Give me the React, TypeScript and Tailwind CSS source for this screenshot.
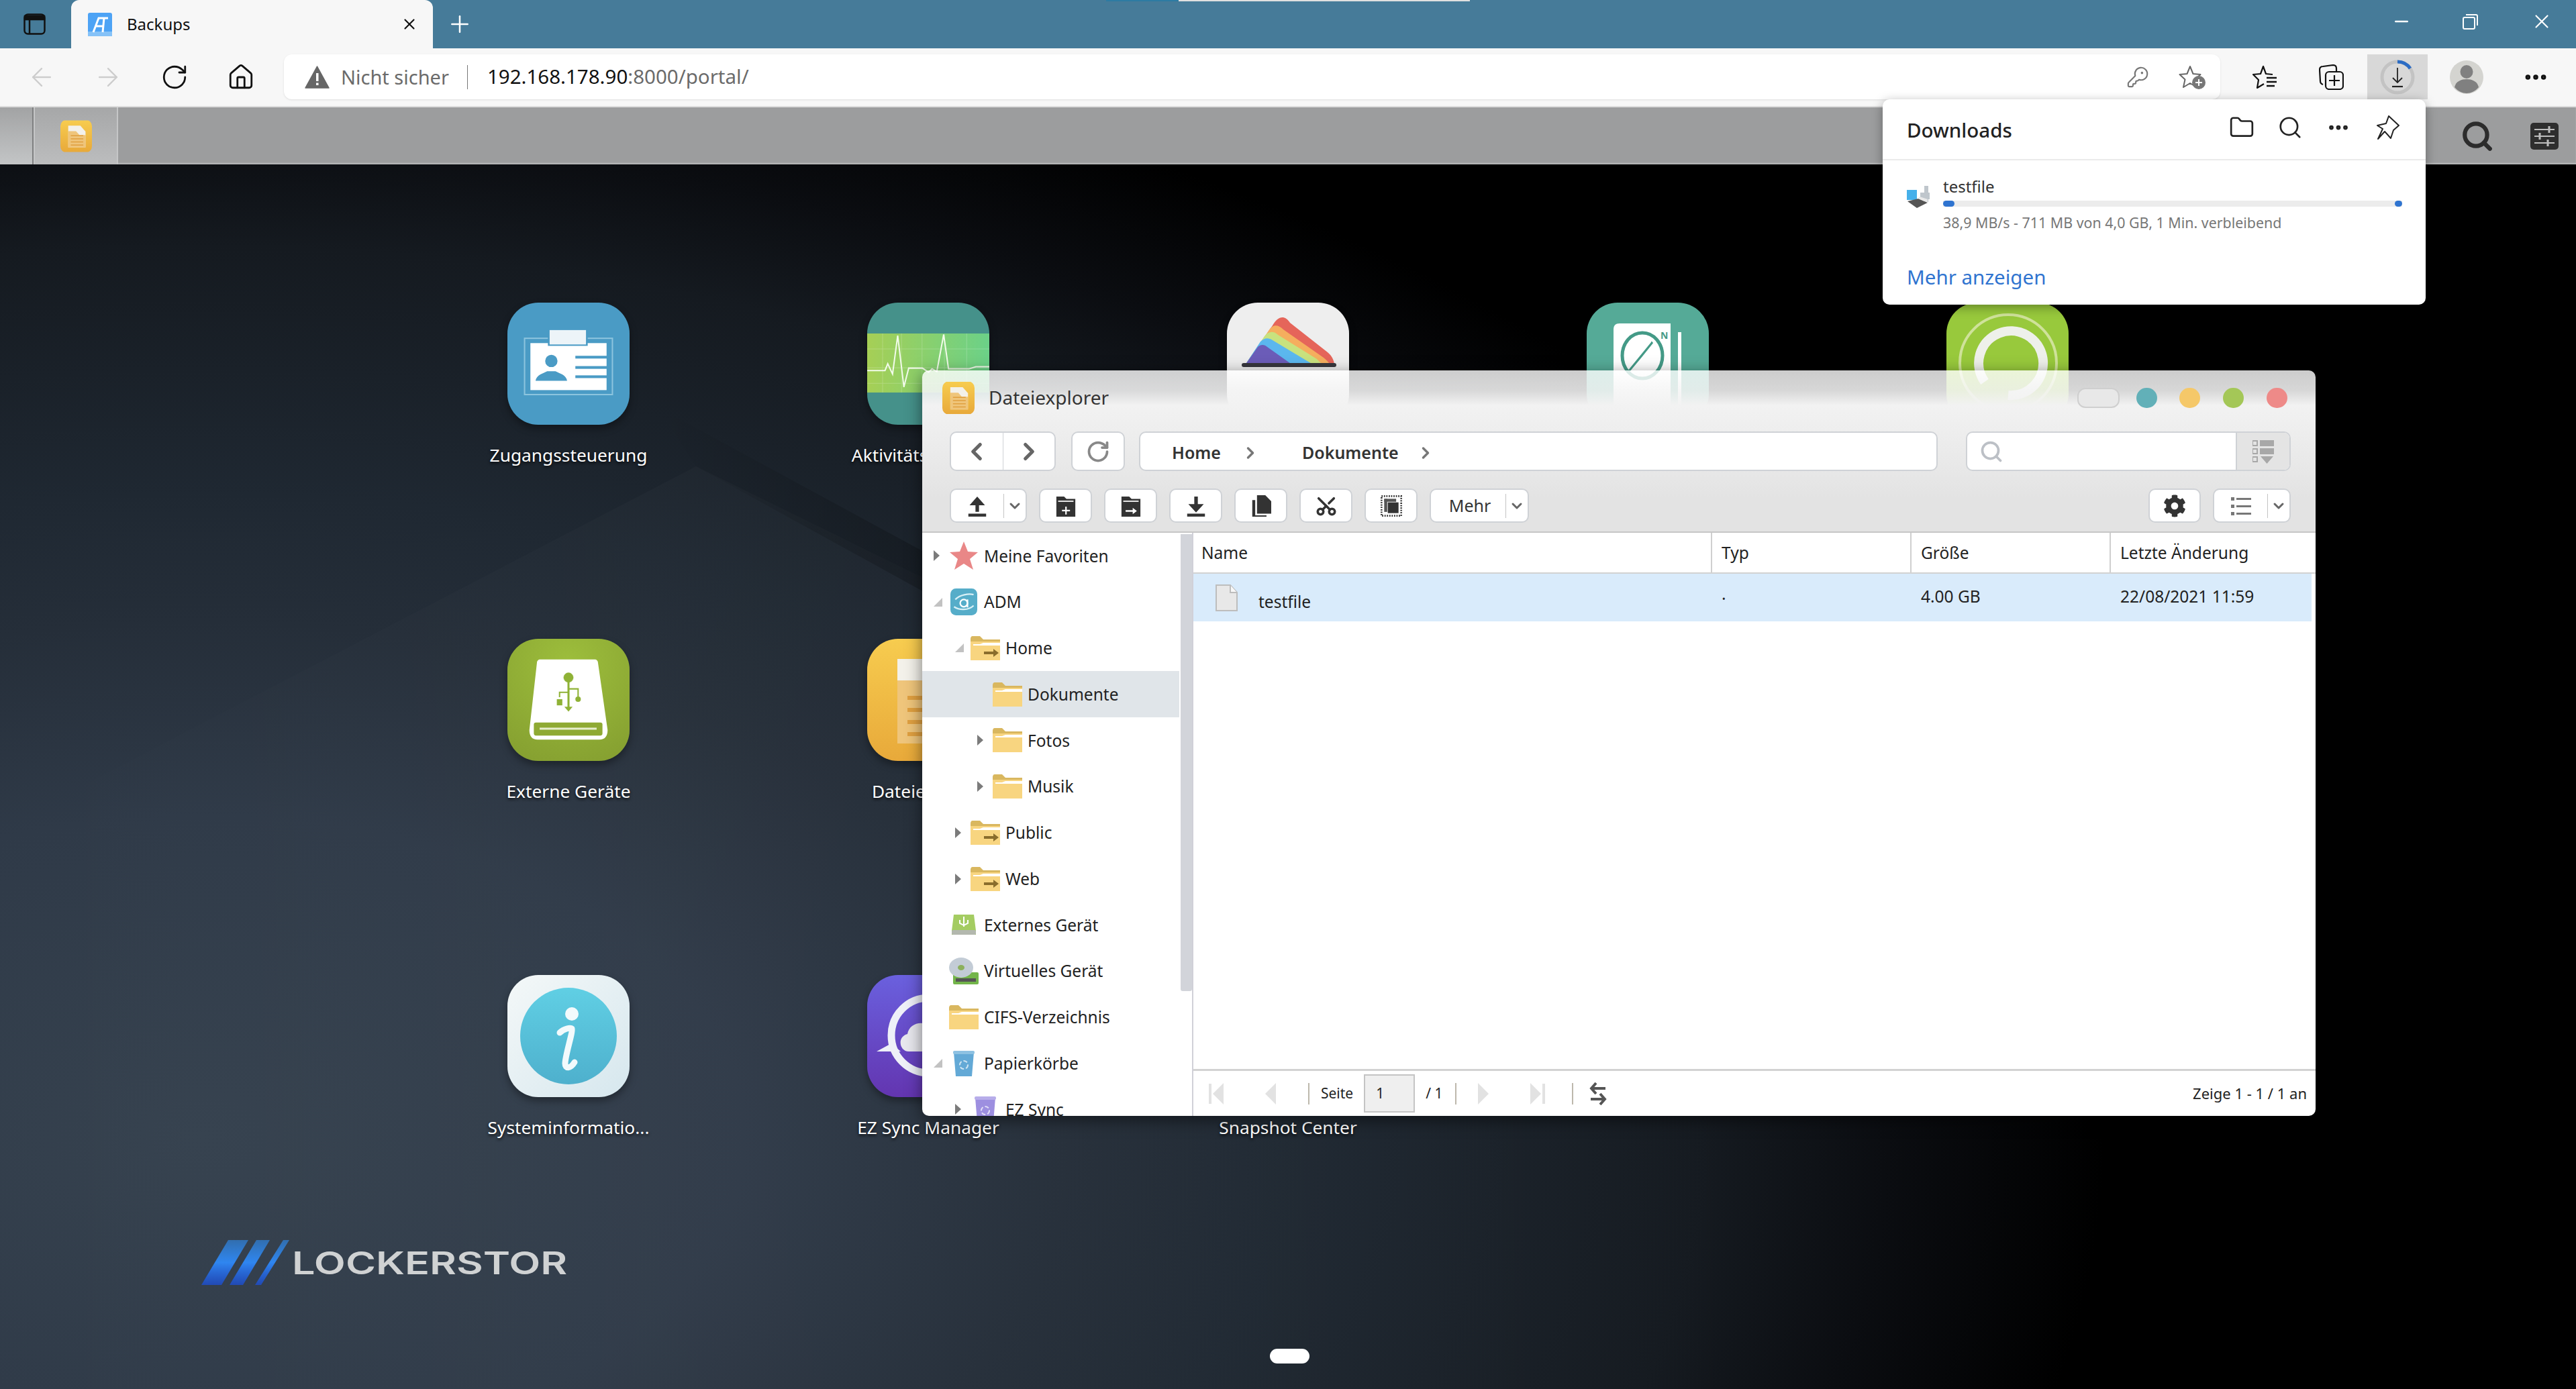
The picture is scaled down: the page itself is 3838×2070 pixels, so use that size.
import { ArrowLeft, ArrowRight, RotateCw, House, KeyRound, Scissors, ChevronDown, ChevronLeft, ChevronRight, Search, X, Plus, Minus, MoreHorizontal, Folder } from 'lucide-react';
import { FaCog } from 'react-icons/fa';
import type { ReactNode } from 'react';

/* ---------- app icons ---------- */

function AccessIcon() {
  return (
    <svg viewBox="0 0 356 356" className="w-full h-full">
      <rect width="356" height="356" fill="#4a9bc5" />
      <rect x="50" y="104" width="256" height="164" fill="none" stroke="#8cc4de" strokeWidth="4" />
      <rect x="67" y="118" width="222" height="137" fill="#fff" />
      <rect x="118" y="76" width="116" height="50" fill="#4a9bc5" />
      <rect x="123" y="80" width="106" height="42" fill="#edf4f8" />
      <circle cx="128" cy="170" r="18" fill="#4a9bc5" />
      <path d="M82 228c2-18 24-22 34-28h24c10 6 32 10 34 28z" fill="#4a9bc5" />
      <rect x="198" y="155" width="92" height="8" fill="#4a9bc5" />
      <rect x="198" y="185" width="92" height="8" fill="#4a9bc5" />
      <rect x="198" y="212" width="92" height="8" fill="#4a9bc5" />
    </svg>
  );
}

function MonitorIcon() {
  return (
    <svg viewBox="0 0 356 356" className="w-full h-full">
      <defs>
        <linearGradient id="ecg" x1="0" x2="1" y1="0" y2="0">
          <stop offset="0" stopColor="#a6cf55" />
          <stop offset="1" stopColor="#6bd188" />
        </linearGradient>
      </defs>
      <rect width="356" height="356" fill="#45918a" />
      <rect y="90" width="356" height="172" fill="url(#ecg)" />
      <path d="M45 90v172M100 90v172M160 90v172M225 90v172M290 90v172M0 135h356M0 190h356M0 235h356" stroke="#ffffff" strokeOpacity=".2" strokeWidth="2" />
      <path d="M0 198h52l8-20 14 30 15-112 18 150 14-55h40l18 12 10-10 14 8 20-108 14 100h60l20-6h50" fill="none" stroke="#f1fbe9" strokeWidth="4" />
    </svg>
  );
}

function RainbowIcon() {
  return (
    <svg viewBox="0 0 182 182" className="w-full h-full">
      <rect width="182" height="182" fill="#eeeeee" />
      <path d="M27 93 68 34c8-14 18-16 26-4l56 44c6 5 10 12 10 19z" fill="#e5655a" />
      <path d="M27 93 62 42c6-10 14-10 22-2l60 42c4 3 8 7 10 11z" fill="#f5ae5e" />
      <path d="M27 93 56 50c6-8 14-8 20-2l58 36 9 9z" fill="#c8e27e" />
      <path d="M27 93 50 58c6-6 12-6 18-2l50 30 12 7z" fill="#5bb7ee" />
      <path d="M27 93 46 66c4-4 10-4 14 0l38 27z" fill="#6b5cb8" />
      <rect x="22" y="90" width="141" height="6" rx="3" fill="#37373d" />
    </svg>
  );
}

function CompassIcon() {
  return (
    <svg viewBox="0 0 182 182" className="w-full h-full">
      <rect width="182" height="182" fill="#55aa97" />
      <path d="M40 40c0-6 3-9 9-9h76v150H40z" fill="#fff" />
      <rect x="136" y="44" width="5" height="130" fill="#fff" />
      <ellipse cx="83" cy="79" rx="30" ry="34" fill="none" stroke="#449a87" strokeWidth="5" />
      <path d="M98 59 62 103l20-24z" fill="#449a87" stroke="#449a87" strokeWidth="3" />
      <text x="110" y="54" fontSize="14" fontWeight="700" fill="#449a87">N</text>
    </svg>
  );
}

function RestoreIcon() {
  return (
    <svg viewBox="0 0 182 182" className="w-full h-full">
      <rect width="182" height="182" fill="#98c93c" />
      <circle cx="92" cy="90" r="72" fill="none" stroke="#cfe29a" strokeWidth="4" />
      <path d="M57 118A48 48 0 1 1 92 138" fill="none" stroke="#eef0ea" strokeWidth="14" />
    </svg>
  );
}

function ExternalIcon() {
  return (
    <svg viewBox="0 0 356 356" className="w-full h-full">
      <defs>
        <radialGradient id="ext" cx=".5" cy=".2" r=".9">
          <stop offset="0" stopColor="#9dbe3c" />
          <stop offset="1" stopColor="#859f30" />
        </radialGradient>
      </defs>
      <rect width="356" height="356" fill="url(#ext)" />
      <path d="M96 60h158c6 0 10 4 10 10l28 196c0 18-8 28-24 28H88c-16 0-24-10-24-28L86 70c0-6 4-10 10-10z" fill="#fff" />
      <rect x="77" y="244" width="200" height="38" rx="6" fill="#8faa33" />
      <rect x="94" y="259" width="166" height="6" fill="#e7eecd" />
      <g fill="#8fb236" stroke="#8fb236">
        <circle cx="178" cy="113" r="14" />
        <path d="M178 125v76" strokeWidth="6" fill="none" />
        <path d="M178 156h-26v14M178 146h28v24" strokeWidth="4" fill="none" />
        <rect x="144" y="176" width="16" height="18" stroke="none" />
        <circle cx="206" cy="176" r="8" stroke="none" />
        <path d="M166 198h24l-12 14z" stroke="none" />
      </g>
    </svg>
  );
}

function ExplorerIcon() {
  return (
    <svg viewBox="0 0 182 182" className="w-full h-full">
      <defs>
        <linearGradient id="expl" x1="0" x2="0" y1="0" y2="1">
          <stop offset="0" stopColor="#f7cc4f" />
          <stop offset="1" stopColor="#e8a93a" />
        </linearGradient>
      </defs>
      <rect width="182" height="182" fill="url(#expl)" />
      <path d="M45 30h70l30 34v92H45z" fill="#f3f1ea" />
      <path d="M45 62h45l20 22h35v72H45z" fill="#eeb655" fillOpacity=".75" />
      <g fill="#e0a040">
        <rect x="60" y="85" width="72" height="6" />
        <rect x="60" y="103" width="72" height="6" />
        <rect x="60" y="121" width="72" height="6" />
        <rect x="60" y="139" width="72" height="6" />
      </g>
    </svg>
  );
}

function InfoIcon() {
  return (
    <svg viewBox="0 0 182 182" className="w-full h-full">
      <defs>
        <linearGradient id="infoBg" x1="0" x2="1" y1="0" y2="1">
          <stop offset="0" stopColor="#f4f8f8" />
          <stop offset="1" stopColor="#d6e7ee" />
        </linearGradient>
        <linearGradient id="infoDot" x1="0" x2="0" y1="0" y2="1">
          <stop offset="0" stopColor="#60cfe4" />
          <stop offset="1" stopColor="#4eb0cd" />
        </linearGradient>
      </defs>
      <rect width="182" height="182" fill="url(#infoBg)" />
      <circle cx="91" cy="91" r="72" fill="url(#infoDot)" />
      <circle cx="96" cy="58" r="10" fill="#f3fafc" />
      <path d="M78 86c6-6 16-8 18-6 2 4-10 40-10 52 0 8 8 8 14-2" fill="none" stroke="#f3fafc" strokeWidth="9" strokeLinecap="round" />
    </svg>
  );
}

function EzSyncIcon() {
  return (
    <svg viewBox="0 0 182 182" className="w-full h-full">
      <defs>
        <linearGradient id="ez" x1="0" x2="0" y1="0" y2="1">
          <stop offset="0" stopColor="#6a60de" />
          <stop offset="1" stopColor="#6335b0" />
        </linearGradient>
      </defs>
      <rect width="182" height="182" fill="url(#ez)" />
      <circle cx="92" cy="90" r="56" fill="none" stroke="#eef0f8" strokeWidth="11" />
      <path d="M36 102 14 114h36z" fill="#eef0f8" />
      <path d="M62 114c-14 0-18-22-2-26 2-14 18-20 30-14 14-4 40 6 40 40z" fill="#e8e8ee" />
    </svg>
  );
}

const APPS: { icon: ReactNode; label: string }[] = [
  { icon: <AccessIcon />, label: 'Zugangssteuerung' },
  { icon: <MonitorIcon />, label: 'Aktivitätsüberwa...' },
  { icon: <RainbowIcon />, label: '' },
  { icon: <CompassIcon />, label: '' },
  { icon: <RestoreIcon />, label: '' },
  { icon: <ExternalIcon />, label: 'Externe Geräte' },
  { icon: <ExplorerIcon />, label: 'Dateiexplorer' },
  { icon: null, label: '' },
  { icon: null, label: '' },
  { icon: null, label: '' },
  { icon: <InfoIcon />, label: 'Systeminformatio...' },
  { icon: <EzSyncIcon />, label: 'EZ Sync Manager' },
  { icon: null, label: 'Snapshot Center' },
];

/* ---------- tree icons ---------- */

function FolderIcon({ shared }: { shared?: boolean }) {
  return (
    <svg viewBox="0 0 44 36" className="w-[44px] h-[36px]">
      <path d="M0 4c0-2 1-4 3-4h11l5 5h25v31H0z" fill="#d9b75f" />
      <rect y="8" width="44" height="28" fill="#f8d580" />
      <path d="M4 12h10l5-2h25v4H4z" fill="#fff" />
      {shared && <path d="M20 27h14v-4l8 6-8 6v-4H20z" transform="translate(0 -4)" fill="#8a6d2c" />}
    </svg>
  );
}

function StarIcon() {
  return (
    <svg viewBox="0 0 44 44" className="w-[44px] h-[44px]">
      <path d="M22 1l6 15 15 1-12 10 5 16-14-9-14 9 5-16L1 17l15-1z" fill="#e98787" />
    </svg>
  );
}

function AdmIcon() {
  return (
    <svg viewBox="0 0 44 44" className="w-[40px] h-[40px]">
      <rect width="44" height="44" rx="9" fill="#56adc9" />
      <path d="M8 18c8-8 22-10 30-8M6 30c8 6 24 6 32-2" fill="none" stroke="#d8f0f6" strokeWidth="2.5" />
      <circle cx="22" cy="24" r="6" fill="none" stroke="#fff" strokeWidth="2.5" />
      <path d="M28 18v13" stroke="#fff" strokeWidth="2.5" />
    </svg>
  );
}

function UsbDriveIcon() {
  return (
    <svg viewBox="0 0 36 30" className="w-[36px] h-[30px]">
      <path d="M3 0h30l3 24v6H0v-6z" fill="#a4cc62" />
      <rect y="23" width="36" height="7" rx="2" fill="#b3b8ae" />
      <path d="M18 3v15M12 8v5l6 3 6-3V8" fill="none" stroke="#fff" strokeWidth="2" />
    </svg>
  );
}

function DiscIcon() {
  return (
    <svg viewBox="0 0 44 40" className="w-[44px] h-[40px]">
      <rect x="6" y="22" width="38" height="18" rx="2" fill="#73b54a" />
      <rect x="10" y="31" width="30" height="5" fill="#555" />
      <ellipse cx="18" cy="15" rx="18" ry="15" fill="#c3ccd6" />
      <ellipse cx="18" cy="15" rx="5" ry="4" fill="#8bb05c" />
    </svg>
  );
}

function TrashIcon({ purple }: { purple?: boolean }) {
  return (
    <svg viewBox="0 0 32 38" className="w-[32px] h-[38px]">
      <path d="M1 2h30l-3 36H4z" fill={purple ? '#9d8fe0' : '#63a9d6'} />
      <rect width="32" height="5" rx="2" fill={purple ? '#b7adea' : '#8dc1e2'} />
      <circle cx="16" cy="21" r="6" fill="none" stroke="#fff" strokeOpacity=".7" strokeWidth="2" strokeDasharray="6 3" />
    </svg>
  );
}

type TreeRow = {
  label: string;
  icon: ReactNode;
  pad: string;
  arrow?: 'open' | 'closed';
  selected?: boolean;
};

const TREE: TreeRow[] = [
  { label: 'Meine Favoriten', icon: <StarIcon />, pad: 'pl-[17px]', arrow: 'closed' },
  { label: 'ADM', icon: <AdmIcon />, pad: 'pl-[17px]', arrow: 'open' },
  { label: 'Home', icon: <FolderIcon shared />, pad: 'pl-[49px]', arrow: 'open' },
  { label: 'Dokumente', icon: <FolderIcon />, pad: 'pl-[82px]', selected: true },
  { label: 'Fotos', icon: <FolderIcon />, pad: 'pl-[82px]', arrow: 'closed' },
  { label: 'Musik', icon: <FolderIcon />, pad: 'pl-[82px]', arrow: 'closed' },
  { label: 'Public', icon: <FolderIcon shared />, pad: 'pl-[49px]', arrow: 'closed' },
  { label: 'Web', icon: <FolderIcon shared />, pad: 'pl-[49px]', arrow: 'closed' },
  { label: 'Externes Gerät', icon: <UsbDriveIcon />, pad: 'pl-[17px]' },
  { label: 'Virtuelles Gerät', icon: <DiscIcon />, pad: 'pl-[17px]' },
  { label: 'CIFS-Verzeichnis', icon: <FolderIcon />, pad: 'pl-[17px]' },
  { label: 'Papierkörbe', icon: <TrashIcon />, pad: 'pl-[17px]', arrow: 'open' },
  { label: 'EZ Sync', icon: <TrashIcon purple />, pad: 'pl-[49px]', arrow: 'closed' },
];

function TreeArrow({ kind }: { kind?: 'open' | 'closed' }) {
  return (
    <span className="w-[23px] shrink-0 flex items-center">
      {kind === 'closed' && <span className="w-0 h-0 border-y-[8px] border-y-transparent border-l-[9px] border-l-[#7b7b7b]" />}
      {kind === 'open' && <span className="w-0 h-0 border-b-[13px] border-b-[#c2c2c2] border-l-[13px] border-l-transparent" />}
    </span>
  );
}

function Btn({ className, children }: { className: string; children?: ReactNode }) {
  return (
    <div className={`${className} flex items-center justify-center bg-white rounded-[10px] border-2 border-[#cfd2d6] shrink-0`}>
      {children}
    </div>
  );
}

function Dropdown({ className, children }: { className: string; children: ReactNode }) {
  return (
    <Btn className={className}>
      <span className="flex-1 flex items-center justify-center">{children}</span>
      <span className="w-px h-[36px] bg-[#c4c4c4]" />
      <ChevronDown size={24} strokeWidth={3} className="text-[#666] mx-[4px]" />
    </Btn>
  );
}

/* ---------- browser chrome icons ---------- */

function SidebarToggle() {
  return (
    <svg viewBox="0 0 33 32" className="w-[33px] h-[32px]" fill="none" stroke="#111" strokeWidth="2.5">
      <rect x="1.5" y="1.5" width="30" height="29" rx="5" />
      <path d="M2 4h29v5H2z" fill="#111" />
      <path d="M9 8v22" />
    </svg>
  );
}

function EdgeFavicon() {
  return (
    <svg viewBox="0 0 36 35" className="w-[36px] h-[35px]">
      <rect width="36" height="35" rx="3" fill="#4da3f5" />
      <rect y="28" width="36" height="7" fill="#85c2f8" />
      <path d="M8 29 16 8h14M12 20h12M24 8l-2 21" fill="none" stroke="#fff" strokeWidth="3" />
    </svg>
  );
}

function WarningIcon() {
  return (
    <svg viewBox="0 0 37 34" className="w-[37px] h-[34px]">
      <path d="M18.5 1 36 33H1z" fill="#666" stroke="#666" strokeWidth="1.5" strokeLinejoin="round" />
      <rect x="17" y="11" width="3.5" height="12" fill="#fff" />
      <rect x="17" y="25.5" width="3.5" height="3.5" fill="#fff" />
    </svg>
  );
}

function StarPlus() {
  return (
    <svg viewBox="0 0 40 36" className="w-[40px] h-[36px]">
      <path d="M17 2l4.5 11 11 1-8 7.500 2.500 11.500-10-6-10 6 2.500-11.500-8-7.500 11-1z" fill="none" stroke="#666" strokeWidth="2" strokeLinejoin="round" />
      <circle cx="30" cy="26" r="10" fill="#777" />
      <path d="M30 21v10M25 26h10" stroke="#fff" strokeWidth="2" />
    </svg>
  );
}

function FavoritesIcon() {
  return (
    <svg viewBox="0 0 38 36" className="w-[38px] h-[36px]" fill="none" stroke="#111" strokeWidth="2.200">
      <path d="M31 14 21 13 17 2 13 13 2 14 10 22 8 34 18 28" strokeLinejoin="round" />
      <path d="M22 19h15M22 25h15M22 31h12" strokeWidth="2.500" />
    </svg>
  );
}

function CollectionsIcon() {
  return (
    <svg viewBox="0 0 37 38" className="w-[37px] h-[38px]" fill="none" stroke="#111" strokeWidth="2.200">
      <path d="M6 30c-3-1-4-3-4-5L1 8c0-3 2-5 5-5l15-2c3 0 5 2 5 5v4" />
      <rect x="10" y="11" width="26" height="26" rx="5" />
      <path d="M23 16v16M15 24h16" />
    </svg>
  );
}

function DownloadProgress() {
  return (
    <svg viewBox="0 0 52 52" className="w-[52px] h-[52px]" fill="none">
      <circle cx="26" cy="26" r="23" stroke="#c3c3c3" strokeWidth="5" />
      <path d="M26 3a23 23 0 0 1 19 10" stroke="#2b6cc4" strokeWidth="5" />
      <path d="M26 12v22M19 27l7 7 7-7" stroke="#222" strokeWidth="1.800" />
      <path d="M18 40h16" stroke="#222" strokeWidth="2.200" />
    </svg>
  );
}

function ProfileIcon() {
  return (
    <svg viewBox="0 0 50 50" className="w-[50px] h-[50px]">
      <circle cx="25" cy="25" r="25" fill="#d4d4d0" />
      <ellipse cx="25" cy="17" rx="9.500" ry="10" fill="#808080" />
      <path d="M7 40c2-9 10-12 18-12s16 3 18 12c-5 6-12 9-18 9s-13-3-18-9z" fill="#808080" />
    </svg>
  );
}

function RestoreWindow() {
  return (
    <svg viewBox="0 0 23 23" className="w-[23px] h-[23px]" fill="none" stroke="#fff" strokeWidth="2">
      <rect x="1" y="5" width="17" height="17" rx="2" />
      <path d="M5 1h15c1 0 2 1 2 2v14" />
    </svg>
  );
}

function PinIcon() {
  return (
    <svg viewBox="0 0 36 36" className="w-[36px] h-[36px]" fill="none" stroke="#222" strokeWidth="2" strokeLinejoin="round">
      <path d="M19 1 34 15 26 22 22 34 13 24 3 35 10 20 2 15 15 12z" />
    </svg>
  );
}

function SettingsTile() {
  return (
    <svg viewBox="0 0 42 40" className="w-[42px] h-[40px]">
      <rect width="42" height="40" rx="5" fill="#2e2e2e" />
      <path d="M6 10h30M6 20h30M6 30h30" stroke="#bdbdbd" strokeWidth="2" />
      <path d="M28 5v10M14 15v10M26 25v10" stroke="#bdbdbd" strokeWidth="3" />
    </svg>
  );
}

/* ---------- explorer toolbar icons ---------- */

function ToolIcon({ children }: { children: ReactNode }) {
  return (
    <svg viewBox="0 0 34 36" className="w-[30px] h-[32px]" fill="#333">
      {children}
    </svg>
  );
}

const UP_ICON = (
  <ToolIcon>
    <path d="M17 2 4 17h10v11h6V17h10z" />
    <rect x="2" y="31" width="30" height="5" />
  </ToolIcon>
);

const TOOLS: ReactNode[] = [
  <ToolIcon key="new">
    <path d="M1 2h13l4 4h15v30H1z" />
    <rect x="4" y="9" width="26" height="2" fill="#fff" />
    <path d="M16 19h2.500v5.500h5.500v2.500h-5.500v5.500h-2.500v-5.500h-5.500v-2.500h5.500z" fill="#fff" />
  </ToolIcon>,
  <ToolIcon key="move">
    <path d="M1 2h13l4 4h15v30H1z" />
    <rect x="4" y="9" width="26" height="2" fill="#fff" />
    <path d="M8 25h12v-4l7 5.500-7 5.500v-4H8z" fill="#fff" />
  </ToolIcon>,
  <ToolIcon key="down">
    <path d="M14 2h6v13h10L17 29 4 15h10z" />
    <rect x="2" y="31" width="30" height="5" />
  </ToolIcon>,
  <ToolIcon key="copy">
    <path d="M10 0h14l10 10v21H10z" />
    <path d="M2 8h5v26h19v2H2z" />
  </ToolIcon>,
  <Scissors key="cut" size={34} strokeWidth={2.500} className="text-[#333] -rotate-90" />,
  <svg key="select" viewBox="0 0 36 36" className="w-[32px] h-[32px]">
    <rect x="1.500" y="1.500" width="33" height="33" fill="none" stroke="#333" strokeWidth="3" strokeDasharray="2 2" />
    <rect x="6" y="6" width="20" height="5" fill="#555" />
    <rect x="6" y="6" width="5" height="22" fill="#555" />
    <rect x="12" y="12" width="18" height="18" fill="#333" />
  </svg>,
];

function PageArrow({ left, bar }: { left?: boolean; bar?: boolean }) {
  return (
    <svg viewBox="0 0 24 34" className={`w-[24px] h-[34px] ${left ? '' : 'rotate-180'}`} fill="#e2e2e2">
      {bar && <rect x="0" y="2" width="4" height="30" />}
      <path d="M22 1v32L6 17z" />
    </svg>
  );
}

function PagerSep() {
  return <span className="block w-[2px] h-[32px] bg-[#bdb8ac] shrink-0" />;
}

export default function App() {
  return (
    <div className="w-[3838px] h-[2070px] relative overflow-hidden flex flex-col bg-black font-['Noto_Sans',sans-serif]">
      <div className="absolute top-0 left-[1648px] w-[108px] h-[2px] bg-[#2d7ba3]" />
      <div className="absolute top-0 left-[1756px] w-[434px] h-[2px] bg-[#e0e0e0]" />

      {/* tab strip */}
      <div className="h-[72px] bg-[#467b99] flex items-center shrink-0">
        <div className="w-[106px] flex justify-center pr-[4px]">
          <SidebarToggle />
        </div>
        <div className="w-[539px] h-[72px] bg-[#f7f7f7] rounded-t-[12px] flex items-center pl-[25px] pr-[22px]">
          <EdgeFavicon />
          <span className="ml-[22px] text-[24px] text-[#111] flex-1">Backups</span>
          <X size={26} strokeWidth={2} className="text-[#111]" />
        </div>
        <Plus size={40} strokeWidth={1.500} className="text-white ml-[20px]" />
        <div className="flex-1" />
        <Minus size={30} strokeWidth={2} className="text-white mr-[76px] mt-[-8px]" />
        <div className="mr-[78px] mt-[-8px]">
          <RestoreWindow />
        </div>
        <X size={34} strokeWidth={1.500} className="text-white mr-[34px] mt-[-8px]" />
      </div>

      {/* address bar row */}
      <div className="h-[88px] bg-[#f7f7f7] border-b-2 border-[#dcdcdc] flex items-start pt-[9px] shrink-0">
        <div className="w-[423px] flex items-center h-[67px]">
          <ArrowLeft size={44} strokeWidth={1.300} className="text-[#cdcdcd] ml-[40px]" />
          <ArrowRight size={44} strokeWidth={1.300} className="text-[#cdcdcd] ml-[55px]" />
          <RotateCw size={42} strokeWidth={1.600} className="text-[#111] ml-[56px]" />
          <House size={42} strokeWidth={1.600} className="text-[#111] ml-[57px]" />
        </div>
        <div className="w-[2885px] h-[67px] bg-white rounded-[12px] flex items-center pl-[31px] pr-[22px] shadow-[0_1px_3px_rgba(0,0,0,0.1)]">
          <WarningIcon />
          <span className="ml-[17px] text-[29px] text-[#6b6b6b]">Nicht sicher</span>
          <span className="w-px h-[36px] bg-[#777] ml-[27px]" />
          <span className="ml-[29px] text-[29.500px] text-[#111]">
            192.168.178.90<span className="text-[#6b6b6b]">:8000/portal/</span>
          </span>
          <div className="flex-1" />
          <KeyRound size={34} strokeWidth={1.500} className="text-[#777] mr-[44px]" />
          <StarPlus />
        </div>
        <div className="flex-1 flex items-center h-[67px] pl-[47px]">
          <FavoritesIcon />
          <div className="ml-[62px]">
            <CollectionsIcon />
          </div>
          <div className="ml-[35px] w-[90px] h-[67px] bg-[#d8d8d8] flex items-center justify-center">
            <DownloadProgress />
          </div>
          <div className="ml-[33px]">
            <ProfileIcon />
          </div>
          <MoreHorizontal size={40} strokeWidth={2.500} className="text-[#111] ml-[58px]" />
        </div>
      </div>

      {/* NAS top bar */}
      <div className="h-[85px] bg-[#9c9d9e] flex items-stretch shrink-0 shadow-[inset_0_-2px_2px_rgba(255,255,255,0.3)]">
        <div className="w-[50px] bg-[linear-gradient(to_bottom,#a2a3a4,#c3c5c6)] border-r-2 border-[#7f8081]" />
        <div className="w-[126px] bg-[linear-gradient(to_bottom,#a6a7a8,#bcbdbe)] border-x-2 border-[#c5c6c7] flex items-center justify-center">
          <div className="w-[47px] h-[50px] rounded-[10px] overflow-hidden">
            <ExplorerIcon />
          </div>
        </div>
        <div className="flex-1" />
        <div className="flex items-center pr-[26px]">
          <Search size={50} strokeWidth={3} className="text-[#2c2c2c]" />
          <div className="ml-[54px]">
            <SettingsTile />
          </div>
        </div>
      </div>

      {/* desktop */}
      <div className="flex-1 relative overflow-hidden bg-[radial-gradient(ellipse_2700px_1600px_at_300px_1450px,#36424f_0%,#2f3a48_30%,#252e39_48%,#1f2832_60%,#151a20_83%,#0b0d11_93%,#000_105%)]">
        <svg className="absolute left-0 top-0 w-full h-full pointer-events-none" viewBox="0 0 3838 1825">
          <defs>
            <linearGradient id="roofBand" x1="0" x2="1" y1="0" y2="0">
              <stop offset="0" stopColor="#000" stopOpacity="0" />
              <stop offset="1" stopColor="#000" stopOpacity=".22" />
            </linearGradient>
            <linearGradient id="roofLight" x1="0" x2="1" y1="0" y2="0">
              <stop offset="0" stopColor="#fff" stopOpacity="0" />
              <stop offset=".25" stopColor="#fff" stopOpacity=".018" />
              <stop offset=".5" stopColor="#fff" stopOpacity=".012" />
              <stop offset=".7" stopColor="#fff" stopOpacity="0" />
            </linearGradient>
          </defs>
          <path d="M0 990 1037 450 3838 1825H0z" fill="url(#roofLight)" />
          <path d="M978 361 1400 590 1400 650 1037 450z" fill="url(#roofBand)" />
        </svg>

        <div className="relative grid grid-cols-[repeat(5,536px)] auto-rows-[501px] pl-[579px] pt-[206px]">
          {APPS.map((app, i) => (
            <div key={i} className="flex flex-col items-center">
              <div className={`w-[182px] h-[182px] rounded-[46px] overflow-hidden ${app.icon ? 'shadow-[0_6px_12px_rgba(0,0,0,0.35)]' : ''}`}>
                {app.icon}
              </div>
              {app.label && (
                <span className="mt-[27px] text-[26.300px] leading-[36px] text-white whitespace-nowrap [text-shadow:0_2px_4px_rgba(0,0,0,0.85)]">
                  {app.label}
                </span>
              )}
            </div>
          ))}
        </div>

        {/* logo */}
        <div className="absolute left-[300px] top-[1603px] flex items-center">
          <svg viewBox="0 0 131 67" className="w-[131px] h-[67px]">
            <defs>
              <linearGradient id="logoBlue" x1="0" x2="0" y1="0" y2="1">
                <stop offset="0" stopColor="#2f8cf0" stopOpacity=".6" />
                <stop offset=".5" stopColor="#2f86f0" />
                <stop offset="1" stopColor="#1a4fe0" stopOpacity=".7" />
              </linearGradient>
            </defs>
            <path d="M40 0h30L30 67H0z" fill="url(#logoBlue)" />
            <path d="M82 0h20L62 67H42z" fill="url(#logoBlue)" />
            <path d="M122 0h9L89 67h-9z" fill="url(#logoBlue)" />
          </svg>
          <span className="ml-[4px] text-[46px] leading-none font-semibold text-[#d0d2d3] font-['Inter',sans-serif] origin-left scale-x-[1.330]">
            LOCKERSTOR
          </span>
        </div>

        {/* dock handle */}
        <div className="absolute left-[1892px] top-[1765px] w-[59px] h-[22px] rounded-full bg-white" />

        {/* explorer window */}
        <div className="absolute left-[1374px] top-[307px] w-[2076px] h-[1111px] rounded-[10px] overflow-hidden flex flex-col shadow-[0_6px_24px_rgba(0,0,0,0.5)]">
          <div className="shrink-0 bg-[linear-gradient(to_bottom,rgba(255,255,255,0.8)_0px,rgba(245,245,245,0.88)_30px,#f2f2f2_52px,#e3e3e3_190px)] border-b-2 border-[#c6c6c6] h-[242px] flex flex-col">
            <div className="h-[91px] flex items-center pl-[30px] pr-[42px] pb-[10px] shrink-0">
              <div className="w-[48px] h-[50px] rounded-[10px] overflow-hidden">
                <ExplorerIcon />
              </div>
              <span className="ml-[21px] mb-[2px] text-[28px] text-[#333] flex-1">Dateiexplorer</span>
              <span className="w-[63px] h-[30px] rounded-[12px] border-2 border-[#cfcfcf] bg-[#e8e8e8]" />
              <span className="ml-[25px] w-[31px] h-[30px] rounded-full bg-[#62b0b8]" />
              <span className="ml-[33px] w-[31px] h-[30px] rounded-full bg-[#f5c869]" />
              <span className="ml-[34px] w-[31px] h-[30px] rounded-full bg-[#a4c757]" />
              <span className="ml-[34px] w-[31px] h-[30px] rounded-full bg-[#ee8a88]" />
            </div>
            <div className="h-[59px] flex pl-[41px] pr-[37px] shrink-0">
              <Btn className="w-[158px]">
                <span className="flex-1 flex justify-center">
                  <ChevronLeft size={42} strokeWidth={3} className="text-[#666]" />
                </span>
                <span className="w-px h-full bg-[#cfd2d6]" />
                <span className="flex-1 flex justify-center">
                  <ChevronRight size={42} strokeWidth={3} className="text-[#666]" />
                </span>
              </Btn>
              <Btn className="w-[80px] ml-[23px]">
                <RotateCw size={36} strokeWidth={2.500} className="text-[#888]" />
              </Btn>
              <div className="w-[1190px] ml-[21px] bg-white rounded-[10px] border-2 border-[#cfd2d6] flex items-center pl-[47px] pt-[4px] text-[25px] font-semibold text-[#333]">
                <span>Home</span>
                <ChevronRight size={28} strokeWidth={3} className="text-[#777] ml-[30px]" />
                <span className="ml-[63px]">Dokumente</span>
                <ChevronRight size={28} strokeWidth={3} className="text-[#777] ml-[26px]" />
              </div>
              <div className="w-[484px] ml-[42px] bg-white rounded-[10px] border-2 border-[#cfd2d6] flex items-center overflow-hidden">
                <Search size={36} strokeWidth={2.500} className="text-[#bcc0c6] ml-[18px]" />
                <div className="flex-1" />
                <div className="w-[80px] h-full bg-[#e4e4e4] border-l-2 border-[#cfd2d6] flex items-center justify-center">
                  <svg viewBox="0 0 32 36" className="w-[32px] h-[36px]" fill="#a8a8a8">
                    <rect x="0" y="2" width="7" height="7" fill="none" stroke="#a8a8a8" strokeWidth="2" />
                    <rect x="11" y="1" width="21" height="9" />
                    <rect x="0" y="14" width="7" height="7" fill="none" stroke="#a8a8a8" strokeWidth="2" />
                    <rect x="11" y="13" width="21" height="9" />
                    <rect x="0" y="26" width="7" height="7" fill="none" stroke="#a8a8a8" strokeWidth="2" />
                    <path d="M12 25h19l-9.500 11z" />
                  </svg>
                </div>
              </div>
            </div>
            <div className="h-[51px] mt-[26px] flex pl-[41px] pr-[37px] shrink-0">
              <Dropdown className="w-[115px]">{UP_ICON}</Dropdown>
              {TOOLS.map((tool, i) => (
                <Btn key={i} className="w-[79px] ml-[18px]">
                  {tool}
                </Btn>
              ))}
              <Dropdown className="w-[148px] ml-[18px]">
                <span className="text-[25px] text-[#333] ml-[5px]">Mehr</span>
              </Dropdown>
              <div className="flex-1" />
              <Btn className="w-[78px]">
                <FaCog size={34} className="text-[#333]" />
              </Btn>
              <Dropdown className="w-[116px] ml-[18px]">
                <svg viewBox="0 0 30 30" className="w-[30px] h-[30px]" fill="#777">
                  <rect x="0" y="2" width="5" height="5" />
                  <rect x="8" y="3" width="22" height="3" />
                  <rect x="0" y="13" width="5" height="5" />
                  <rect x="8" y="14" width="22" height="3" />
                  <rect x="0" y="24" width="5" height="5" />
                  <rect x="8" y="25" width="22" height="3" />
                </svg>
              </Dropdown>
            </div>
          </div>

          <div className="flex-1 min-h-0 flex bg-white">
            {/* folder tree */}
            <div className="w-[404px] relative overflow-hidden border-r-2 border-[#d0d0d8] shrink-0">
              {TREE.map((row) => (
                <div
                  key={row.label}
                  className={`h-[68.750px] flex items-center mr-[19px] ${row.pad} ${row.selected ? 'bg-[#e0e5e9]' : ''}`}
                >
                  <TreeArrow kind={row.arrow} />
                  <span className="w-[44px] shrink-0 flex justify-center">{row.icon}</span>
                  <span className="ml-[8px] mt-[1px] text-[24.500px] text-[#222] whitespace-nowrap">{row.label}</span>
                </div>
              ))}
              <div className="absolute left-[385px] top-[2px] w-[17px] h-[681px] bg-[#cdcfd6]/90 rounded-b-[3px]" />
            </div>

            {/* file list */}
            <div className="flex-1 min-w-0 flex flex-col">
              <div className="h-[59px] flex shrink-0 text-[24.500px] text-[#222] border-b-2 border-[#d2d2d2] box-content">
                <div className="w-[771px] pl-[12px] pt-[2px] flex items-center">Name</div>
                <div className="w-[297px] pl-[14px] pt-[2px] flex items-center border-l-2 border-[#cfcfcf]">Typ</div>
                <div className="w-[297px] pl-[14px] pt-[2px] flex items-center border-l-2 border-[#cfcfcf]">Größe</div>
                <div className="flex-1 pl-[14px] pt-[2px] flex items-center border-l-2 border-[#cfcfcf]">Letzte Änderung</div>
              </div>
              <div className="h-[71px] mr-[6px] bg-[#d9ebfb] flex text-[24.500px] text-[#222] shrink-0">
                <div className="w-[771px] pl-[33px] flex items-center">
                  <svg viewBox="0 0 33 40" className="w-[33px] h-[40px]">
                    <path d="M1 1h21l10 11v27H1z" fill="#e8e8e8" stroke="#bdbdbd" strokeWidth="2" />
                    <path d="M22 1v11h10" fill="#f8f8f8" stroke="#bdbdbd" strokeWidth="2" />
                  </svg>
                  <span className="ml-[31px] mt-[14px]">testfile</span>
                </div>
                <div className="w-[297px] pl-[16px] pt-[12px]">.</div>
                <div className="w-[297px] pl-[16px] pt-[16px]">4.00 GB</div>
                <div className="flex-1 pl-[16px] pt-[16px]">22/08/2021 11:59</div>
              </div>
              <div className="flex-1" />
              <div className="h-[70px] border-t-[3px] border-[#d2d2d2] flex items-center shrink-0 pl-[23px] pr-[13px] text-[21px] text-[#222]">
                <PageArrow left bar />
                <span className="ml-[54px]">
                  <PageArrow left />
                </span>
                <span className="ml-[46px]">
                  <PagerSep />
                </span>
                <span className="ml-[17px]">Seite</span>
                <span className="ml-[16px] w-[76px] h-[57px] bg-[#efefef] border-2 border-[#c4c4c4] flex items-center pl-[16px]">1</span>
                <span className="ml-[16px]">/ 1</span>
                <span className="ml-[18px]">
                  <PagerSep />
                </span>
                <span className="ml-[30px]">
                  <PageArrow />
                </span>
                <span className="ml-[54px]">
                  <PageArrow bar />
                </span>
                <span className="ml-[40px]">
                  <PagerSep />
                </span>
                <svg viewBox="0 0 30 40" className="ml-[22px] w-[30px] h-[40px]" fill="none" stroke="#555" strokeWidth="4">
                  <path d="M26 12H6M12 4l-7 8 7 8" />
                  <path d="M4 28h20M18 20l7 8-7 8" />
                </svg>
                <div className="flex-1" />
                <span className="text-[22px]">Zeige 1 - 1 / 1 an</span>
              </div>
            </div>
          </div>
        </div>
      </div>

      {/* downloads flyout */}
      <div className="absolute left-[2805px] top-[148px] w-[809px] h-[306px] bg-white rounded-[10px] shadow-[0_4px_16px_rgba(0,0,0,0.35)] flex flex-col">
        <div className="h-[91px] border-b-2 border-[#ebebeb] flex items-center pl-[36px] pt-[3px] shrink-0">
          <span className="text-[29.500px] font-medium text-[#222] flex-1">Downloads</span>
          <Folder size={38} strokeWidth={1.700} className="text-[#222] mt-[-9px]" />
          <Search size={38} strokeWidth={1.700} className="text-[#222] ml-[34px] mt-[-9px]" />
          <MoreHorizontal size={36} strokeWidth={2.500} className="text-[#222] ml-[35px] mt-[-9px]" />
          <div className="ml-[38px] mr-[38px] mt-[-9px]">
            <PinIcon />
          </div>
        </div>
        <div className="flex pl-[36px] pt-[24px]">
          <svg viewBox="0 0 36 33" className="w-[36px] h-[33px] mt-[14px] mr-[18px] shrink-0">
            <rect x="0" y="6" width="15" height="15" fill="#46b0ea" />
            <path d="M26 0h6v24h-6zM20 10h14v10H20z" fill="#bfc6cc" />
            <path d="M1 23l16-4 14 6-16 8z" fill="#555" />
            <path d="M17 19l14 6v-5l-12-4z" fill="#e9e9e9" />
          </svg>
          <div className="w-[684px] flex flex-col">
            <span className="text-[24px] leading-[30px] text-[#333]">testfile</span>
            <div className="h-[9px] mt-[6px] bg-[#ececec] flex justify-between">
              <span className="w-[17px] h-full bg-[#2f74d0] rounded-full" />
              <span className="w-[11px] h-full bg-[#2f74d0] rounded-full" />
            </div>
            <span className="text-[21.400px] leading-[30px] text-[#777] mt-[9px]">
              38,9 MB/s - 711 MB von 4,0 GB, 1 Min. verbleibend
            </span>
          </div>
        </div>
        <span className="ml-[36px] mt-[46px] text-[29.500px] leading-[40px] text-[#2f74d0]">Mehr anzeigen</span>
      </div>
    </div>
  );
}
